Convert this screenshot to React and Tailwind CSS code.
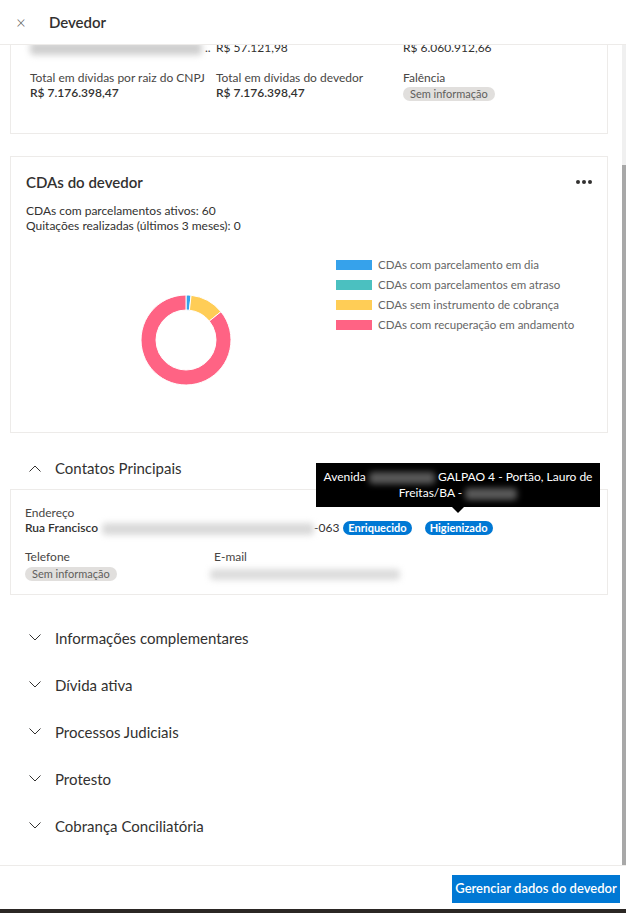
import React from 'react'

const FONT = "font-['Lato',sans-serif]"

function Chevron({ up = false }) {
  return (
    <svg width="12" height="7" viewBox="0 0 12 7" className="shrink-0">
      <polyline
        points={up ? '0.5,6.5 6,1 11.5,6.5' : '0.5,0.5 6,6 11.5,0.5'}
        fill="none"
        stroke="#323130"
        strokeWidth="1"
      />
    </svg>
  )
}

function Blur({ w, h = 11, tone = 'bg-[#cfcfcf]' }) {
  return <span className={`inline-block rounded-sm ${tone} blur-[3px] align-middle`} style={{ width: w, height: h }} />
}

function GrayPill({ children }) {
  return (
    <span className="inline-flex h-[14px] items-center rounded-full bg-[#e1dfdd] px-[7px] text-[11px] leading-none text-[#605e5c]">
      {children}
    </span>
  )
}

function BluePill({ children }) {
  return (
    <span className="inline-flex h-[14px] items-center rounded-full bg-[#0078d4] px-[5px] text-[11px] font-bold leading-none text-white">
      {children}
    </span>
  )
}

// donut geometry
const CX = 45
const CY = 45
const RO = 45
const RI = 30

function arc(a0, a1) {
  const p = (r, a) => {
    const t = ((a - 90) * Math.PI) / 180
    return [CX + r * Math.cos(t), CY + r * Math.sin(t)]
  }
  const large = a1 - a0 > 180 ? 1 : 0
  const [x0, y0] = p(RO, a0)
  const [x1, y1] = p(RO, a1)
  const [x2, y2] = p(RI, a1)
  const [x3, y3] = p(RI, a0)
  return `M${x0},${y0} A${RO},${RO} 0 ${large} 1 ${x1},${y1} L${x2},${y2} A${RI},${RI} 0 ${large} 0 ${x3},${y3} Z`
}

const segments = [
  { from: 0, to: 6.5, color: '#36a2eb' },
  { from: 6.5, to: 51, color: '#ffcd56' },
  { from: 51, to: 360, color: '#ff6384' },
]

const legend = [
  { color: 'bg-[#36a2eb]', label: 'CDAs com parcelamento em dia' },
  { color: 'bg-[#4bc0c0]', label: 'CDAs com parcelamentos em atraso' },
  { color: 'bg-[#ffcd56]', label: 'CDAs sem instrumento de cobrança' },
  { color: 'bg-[#ff6384]', label: 'CDAs com recuperação em andamento' },
]

const sections = [
  'Informações complementares',
  'Dívida ativa',
  'Processos Judiciais',
  'Protesto',
  'Cobrança Conciliatória',
]

export default function App() {
  return (
    <div className={`flex h-[913px] w-[626px] flex-col overflow-hidden bg-white text-[#323130] ${FONT}`}>
      {/* header */}
      <header className="flex h-[45px] shrink-0 items-center border-b border-[#edebe9] pl-[16px]">
        <span className="text-[17px] font-light leading-none text-[#605e5c]">×</span>
        <h1 className="ml-[23px] text-[15px] font-semibold">Devedor</h1>
      </header>

      <div className="flex min-h-0 flex-1">
        <main className="min-w-0 flex-1 overflow-hidden pl-[10px] pr-[14px]">
          <div className="-mt-[20px]">
            {/* summary card (scrolled) */}
            <section className="border border-[#edebe9] pb-[32px] pl-[19px] pt-[14px] text-[12px]">
              <div className="grid grid-cols-[186px_187px_1fr] leading-[16px]">
                <div className="flex items-center">
                  <Blur w={172} h={13} />
                  <span className="ml-[3px]">..</span>
                </div>
                <div>R$ 57.121,98</div>
                <div>R$ 6.060.912,66</div>
              </div>
              <div className="mt-[14px] grid grid-cols-[186px_187px_1fr] leading-[15px]">
                <div>
                  <div className="text-[#484644]">Total em dívidas por raiz do CNPJ</div>
                  <div className="font-semibold">R$ 7.176.398,47</div>
                </div>
                <div>
                  <div className="text-[#484644]">Total em dívidas do devedor</div>
                  <div className="font-semibold">R$ 7.176.398,47</div>
                </div>
                <div>
                  <div className="text-[#484644]">Falência</div>
                  <div className="mt-px">
                    <GrayPill>Sem informação</GrayPill>
                  </div>
                </div>
              </div>
            </section>

            {/* CDAs card */}
            <section className="mt-[22px] border border-[#edebe9] pl-[15px] pr-[15px] pt-[15px]">
              <div className="flex items-center justify-between leading-[20px]">
                <h2 className="text-[15px] font-semibold">CDAs do devedor</h2>
                <span className="flex gap-[2px]">
                  <span className="h-[4px] w-[4px] rounded-full bg-[#323130]" />
                  <span className="h-[4px] w-[4px] rounded-full bg-[#323130]" />
                  <span className="h-[4px] w-[4px] rounded-full bg-[#323130]" />
                </span>
              </div>
              <div className="mt-[11px] text-[12px] leading-[15px]">
                <div>CDAs com parcelamentos ativos: 60</div>
                <div>Quitações realizadas (últimos 3 meses): 0</div>
              </div>
              <div className="mt-[17px] flex h-[182px]">
                <div className="w-[310px] shrink-0 pl-[115px] pt-[45px]">
                  <svg width="90" height="90" viewBox="0 0 90 90">
                    {segments.map((s) => (
                      <path key={s.color} d={arc(s.from, s.to)} fill={s.color} stroke="#fff" strokeWidth="1" />
                    ))}
                  </svg>
                </div>
                <ul className="pt-[5px] text-[11.5px] text-[#666]">
                  {legend.map((l) => (
                    <li key={l.label} className="flex h-[20px] items-center">
                      <span className={`h-[10px] w-[36px] ${l.color}`} />
                      <span className="ml-[6px]">{l.label}</span>
                    </li>
                  ))}
                </ul>
              </div>
            </section>

            {/* Contatos Principais */}
            <div className="mt-[25px] flex h-[20px] items-center gap-[14px] pl-[19px]">
              <Chevron up />
              <span className="text-[15px] leading-[20px]">Contatos Principais</span>
            </div>
            <section className="relative mt-[11px] border border-[#edebe9] pb-[13px] pl-[14px] pt-[15px] text-[12px] leading-[15px]">
              <div className="text-[#484644]">Endereço</div>
              <div className="flex items-center">
                <span className="font-semibold">Rua Francisco</span>
                <span className="ml-[4px]">
                  <Blur w={212} h={12} tone="bg-[#d9d9d9]" />
                </span>
                <span>-063</span>
                <span className="ml-[4px]">
                  <BluePill>Enriquecido</BluePill>
                </span>
                <span className="ml-[13px]">
                  <BluePill>Higienizado</BluePill>
                </span>
              </div>
              <div className="mt-[14px] grid grid-cols-[189px_1fr]">
                <div>
                  <div className="text-[#484644]">Telefone</div>
                  <div className="mt-[2px]">
                    <GrayPill>Sem informação</GrayPill>
                  </div>
                </div>
                <div>
                  <div className="text-[#484644]">E-mail</div>
                  <div className="-ml-[4px] mt-[2px]">
                    <Blur w={190} h={11} tone="bg-[#dcdcdc]" />
                  </div>
                </div>
              </div>

              {/* tooltip over the badge */}
              <div className="absolute left-[305px] top-[-27px] w-[284px] bg-black px-[4px] py-[6px] text-center text-[12px] leading-[16px] text-white">
                <div className="whitespace-nowrap">
                  Avenida <Blur w={66} h={12} tone="bg-[#5a5a5a]" /> GALPAO 4 - Portão, Lauro de
                </div>
                <div>
                  Freitas/BA - <Blur w={52} h={12} tone="bg-[#5a5a5a]" />
                </div>
                <span className="absolute left-[136px] top-full h-0 w-0 border-x-[6px] border-t-[6px] border-x-transparent border-t-black" />
              </div>
            </section>

            {/* collapsed sections */}
            <div className="mt-[19px]">
              {sections.map((s) => (
                <div key={s} className="flex h-[47px] items-center gap-[14px] pl-[19px]">
                  <Chevron />
                  <span className="text-[15px] leading-[20px]">{s}</span>
                </div>
              ))}
            </div>
          </div>
        </main>

        {/* scrollbar */}
        <div className="flex w-[4px] shrink-0 flex-col">
          <div className="h-[120px] bg-[#f0f0f0]" />
          <div className="flex-1 bg-[#a8a8a8]" />
        </div>
      </div>

      {/* footer */}
      <footer className="flex h-[44px] shrink-0 justify-end border-t border-[#edebe9] pr-[6px] pt-[9px]">
        <button className="h-[28px] w-[168px] whitespace-nowrap bg-[#0078d4] text-[13px] font-semibold text-white">
          Gerenciar dados do devedor
        </button>
      </footer>
      <div className="h-[4px] shrink-0 bg-[#2b2724]" />
    </div>
  )
}
